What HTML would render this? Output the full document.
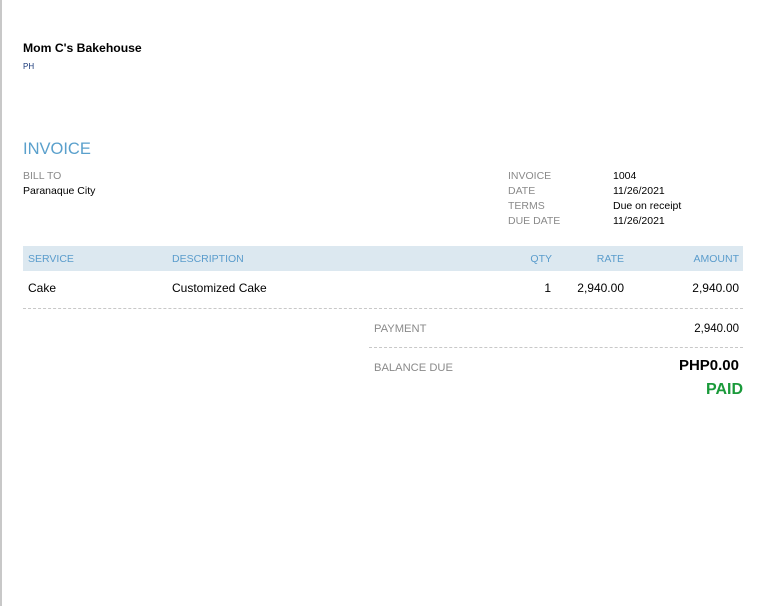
<!DOCTYPE html>
<html><head><meta charset="utf-8"><style>
body{margin:0;width:765px;height:606px;background:#fff;font-family:"Liberation Sans",sans-serif;position:relative;overflow:hidden}
.a{position:absolute;white-space:nowrap}
.g{color:#8a8a8a}
.s{font-size:10.5px}
.h{color:#5a9ccc;font-size:10.5px}
</style></head><body>
<div style="position:absolute;left:0;top:0;width:2px;height:606px;background:#c8c8c8"></div>
<div class="a" style="left:23px;top:41px;font-size:12.2px;font-weight:bold;color:#000">Mom C's Bakehouse</div>
<div class="a" style="left:23px;top:62px;font-size:8px;color:#1a3a7a">PH</div>
<div class="a" style="left:23px;top:140px;font-size:16.5px;color:#5aa0cc">INVOICE</div>
<div class="a g s" style="left:23px;top:170px">BILL TO</div>
<div class="a s" style="left:23px;top:185px">Paranaque City</div>
<div class="a g s" style="left:508px;top:170px">INVOICE</div>
<div class="a g s" style="left:508px;top:185px">DATE</div>
<div class="a g s" style="left:508px;top:200px">TERMS</div>
<div class="a g s" style="left:508px;top:215px">DUE DATE</div>
<div class="a s" style="left:613px;top:170px">1004</div>
<div class="a s" style="left:613px;top:185px">11/26/2021</div>
<div class="a s" style="left:613px;top:200px">Due on receipt</div>
<div class="a s" style="left:613px;top:215px">11/26/2021</div>
<div style="position:absolute;left:23px;top:246px;width:720px;height:25px;background:#dce8f0"></div>
<div class="a h" style="left:28px;top:253px">SERVICE</div>
<div class="a h" style="left:172px;top:253px">DESCRIPTION</div>
<div class="a h" style="right:213px;top:253px">QTY</div>
<div class="a h" style="right:141px;top:253px">RATE</div>
<div class="a h" style="right:26px;top:253px">AMOUNT</div>
<div class="a" style="left:28px;top:281px;font-size:12px">Cake</div>
<div class="a" style="left:172px;top:281px;font-size:12px">Customized Cake</div>
<div class="a" style="right:214px;top:281px;font-size:12px">1</div>
<div class="a" style="right:141px;top:281px;font-size:12px">2,940.00</div>
<div class="a" style="right:26px;top:281px;font-size:12px">2,940.00</div>
<div style="position:absolute;left:23px;top:308px;width:720px;border-top:1px dashed #c8c8c8"></div>
<div class="a g" style="left:374px;top:323px;font-size:11.2px">PAYMENT</div>
<div class="a" style="right:26px;top:323px;font-size:11.5px">2,940.00</div>
<div style="position:absolute;left:369px;top:347px;width:374px;border-top:1px dashed #c8c8c8"></div>
<div class="a g" style="left:374px;top:362px;font-size:11.2px">BALANCE DUE</div>
<div class="a" style="right:26px;top:357px;font-size:15px;font-weight:bold">PHP0.00</div>
<div class="a" style="right:22px;top:381px;font-size:16px;font-weight:bold;color:#1a9a3a">PAID</div>
</body></html>
